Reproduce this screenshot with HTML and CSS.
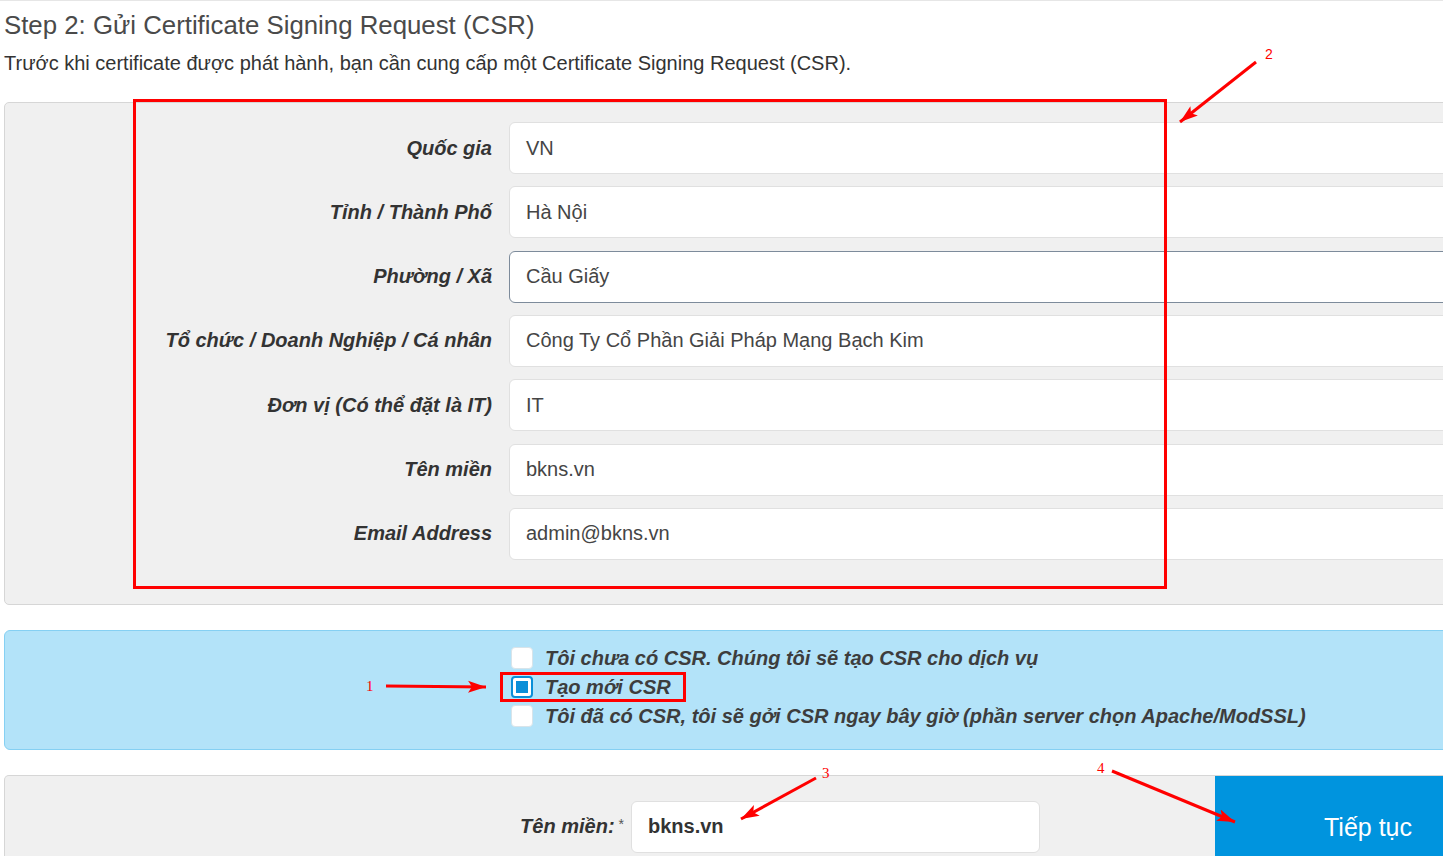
FILE: index.html
```html
<!DOCTYPE html>
<html lang="vi">
<head>
<meta charset="utf-8">
<title>Step 2: Gửi CSR</title>
<link rel="stylesheet" href="styles.css">
</head>
<body>
<div class="page">
  <h1 class="title">Step 2: Gửi Certificate Signing Request (CSR)</h1>
  <p class="lead">Trước khi certificate được phát hành, bạn cần cung cấp một Certificate Signing Request (CSR).</p>

  <div class="panel csr-form">
    <label class="lbl">Quốc gia</label><div class="field">VN</div>
    <label class="lbl">Tỉnh / Thành Phố</label><div class="field">Hà Nội</div>
    <label class="lbl">Phường / Xã</label><div class="field focus">Cầu Giấy</div>
    <label class="lbl">Tổ chức / Doanh Nghiệp / Cá nhân</label><div class="field">Công Ty Cổ Phần Giải Pháp Mạng Bạch Kim</div>
    <label class="lbl">Đơn vị (Có thể đặt là IT)</label><div class="field">IT</div>
    <label class="lbl">Tên miền</label><div class="field">bkns.vn</div>
    <label class="lbl">Email Address</label><div class="field">admin@bkns.vn</div>
  </div>

  <div class="panel info">
    <div class="options">
      <div class="opt"><span class="box"></span><span>Tôi chưa có CSR. Chúng tôi sẽ tạo CSR cho dịch vụ</span></div>
      <div class="opt"><span class="box checked"><span class="dot"></span></span><span>Tạo mới CSR</span></div>
      <div class="opt"><span class="box"></span><span>Tôi đã có CSR, tôi sẽ gởi CSR ngay bây giờ (phần server chọn Apache/ModSSL)</span></div>
    </div>
  </div>

  <div class="panel bottom">
    <div class="domain-lbl"><b>Tên miền:</b><span class="req">*</span></div>
    <div class="field domain">bkns.vn</div>
    <div class="btn">Tiếp tục</div>
  </div>
</div>

<svg class="overlay" width="1443" height="856" viewBox="0 0 1443 856" xmlns="http://www.w3.org/2000/svg">
  <defs>
    <marker id="ah" markerUnits="userSpaceOnUse" markerWidth="20" markerHeight="14" refX="18" refY="7" orient="auto">
      <path d="M0,1 L18,7 L0,13 L4,7 Z" fill="#f00"/>
    </marker>
  </defs>
  <rect x="134.5" y="100.5" width="1031" height="487" fill="none" stroke="#f00" stroke-width="3"/>
  <rect x="501.5" y="673.5" width="183" height="27" fill="none" stroke="#f00" stroke-width="3"/>
  <line x1="1256" y1="62" x2="1180" y2="122" stroke="#f00" stroke-width="3" marker-end="url(#ah)"/>
  <line x1="386" y1="686" x2="486" y2="687" stroke="#f00" stroke-width="3" marker-end="url(#ah)"/>
  <line x1="816" y1="778" x2="741" y2="819" stroke="#f00" stroke-width="3" marker-end="url(#ah)"/>
  <line x1="1112" y1="771" x2="1235" y2="822" stroke="#f00" stroke-width="3" marker-end="url(#ah)"/>
  <text x="1265" y="59" class="num sans">2</text>
  <text x="366" y="691" class="num">1</text>
  <text x="822" y="778" class="num">3</text>
  <text x="1097" y="773" class="num">4</text>
</svg>
</body>
</html>
```
FILE: styles.css
```css
html, body {
  margin: 0;
  padding: 0;
  overflow: hidden;
  background: #fff;
}
body {
  width: 1443px;
  height: 856px;
  position: relative;
  font-family: "Liberation Sans", Arial, sans-serif;
  color: #333;
}
.page {
  border-top: 1px solid #e6e6e6;
  padding-left: 4px;
}
.title {
  margin: 9px 0 0 0;
  font-size: 25.8px;
  font-weight: normal;
  line-height: 30px;
  color: #4a4a4a;
}
.lead {
  margin: 11px 0 0 0;
  font-size: 20px;
  line-height: 25px;
  color: #333;
}
.panel {
  width: 1460px;
  box-sizing: border-box;
  border: 1px solid #d6d6d6;
  border-radius: 5px;
  background: #f0f0f0;
}
.csr-form {
  margin-top: 26px;
  padding: 19px 0 44px 0;
  display: grid;
  grid-template-columns: 487px 1fr;
  column-gap: 17px;
  row-gap: 12.33px;
  align-items: center;
}
.lbl {
  text-align: right;
  font-weight: bold;
  font-style: italic;
  font-size: 20px;
  color: #333;
}
.field {
  height: 52px;
  box-sizing: border-box;
  background: #fff;
  border: 1px solid #e0e0e0;
  border-radius: 6px;
  padding: 0 16px;
  display: flex;
  align-items: center;
  font-size: 20px;
  color: #454545;
}
.field.focus {
  border-color: #7d8b9b;
}
.info {
  margin-top: 25px;
  height: 120px;
  background: #b3e3f9;
  border-color: #85d0f3;
  border-radius: 6px;
  padding: 13px 0 0 506px;
}
.opt {
  display: flex;
  align-items: center;
  height: 29px;
  gap: 12px;
  font-weight: bold;
  font-style: italic;
  font-size: 20px;
  color: #3d3d3d;
}
.box {
  width: 22px;
  height: 22px;
  box-sizing: border-box;
  background: #fff;
  border: 1px solid #d8e4ea;
  border-radius: 4px;
  display: flex;
  align-items: center;
  justify-content: center;
}
.box.checked {
  border: 2px solid #0b8fd8;
}
.dot {
  width: 12px;
  height: 12px;
  background: #0b8fd8;
}
.bottom {
  margin-top: 25px;
  height: 100px;
  display: flex;
  align-items: flex-start;
  border-bottom: none;
}
.domain-lbl {
  width: 619px;
  margin-top: 25px;
  height: 52px;
  display: flex;
  align-items: center;
  justify-content: flex-end;
  font-size: 20px;
  color: #333;
}
.domain-lbl b {
  font-style: italic;
}
.req {
  font-size: 14px;
  margin-left: 4px;
  margin-bottom: 6px;
  color: #555;
}
.field.domain {
  margin-top: 25px;
  margin-left: 7px;
  width: 409px;
  font-weight: bold;
  color: #333;
}
.btn {
  margin-left: auto;
  width: 248px;
  height: 100px;
  background: #0094de;
  color: #fff;
  font-size: 25px;
  padding: 37px 0 0 109px;
  box-sizing: border-box;
}
.overlay {
  position: absolute;
  left: 0;
  top: 0;
  pointer-events: none;
}
.num {
  font-family: "Liberation Serif", serif;
  font-size: 15px;
  fill: #f00;
}
.num.sans {
  font-family: "Liberation Sans", sans-serif;
  font-size: 14px;
}
```
